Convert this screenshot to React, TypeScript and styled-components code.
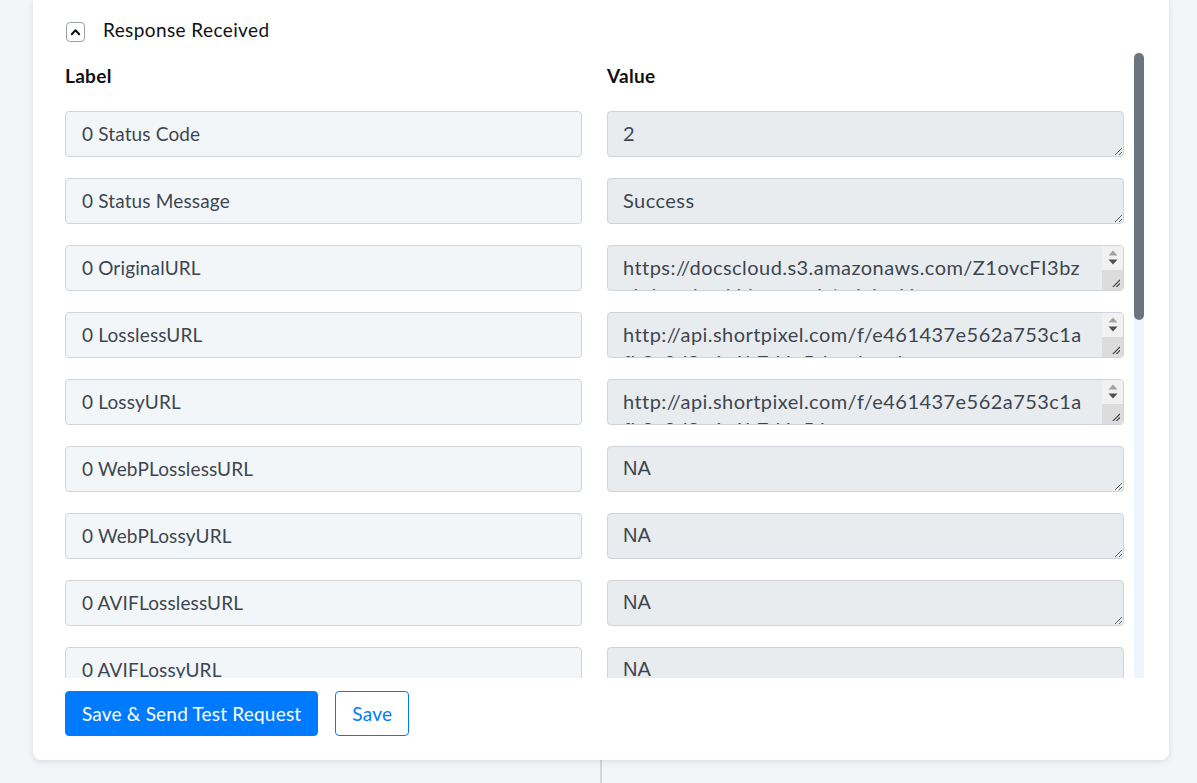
import React from "react";
import styled, { createGlobalStyle } from "styled-components";

const GlobalStyle = createGlobalStyle`
  html, body {
    margin: 0;
    padding: 0;
    background: #f3f6f9;
    overflow: hidden;
  }
  body {
    font-family: Lato, "Open Sans", sans-serif;
    color: #212529;
  }
  * { box-sizing: border-box; }
`;

const Page = styled.div`
  width: 1197px;
  height: 783px;
  padding: 0 28px 0 33px;
  display: flex;
  flex-direction: column;
`;

const Card = styled.section`
  background: #ffffff;
  border-radius: 0 0 8px 8px;
  box-shadow: 0 2px 6px rgba(30, 40, 60, 0.12);
  padding: 22px 25px 24px 32px;
  display: flex;
  flex-direction: column;
  position: relative;
  z-index: 1;
`;

const Connector = styled.div`
  width: 2px;
  flex: 1;
  margin: -8px auto 0;
  background: #d3d7dc;
`;

const Header = styled.div`
  display: flex;
  align-items: center;
  gap: 18px;
  height: 20px;
  margin-left: 1px;
`;

const Toggle = styled.button`
  width: 19px;
  height: 20px;
  padding: 0;
  border: 1px solid #9aa0a6;
  border-radius: 4px;
  background: #fff;
  display: flex;
  align-items: center;
  justify-content: center;
  cursor: pointer;
`;

const Title = styled.h3`
  margin: 0 0 4px;
  font-size: 19px;
  letter-spacing: 0.4px;
  font-weight: 400;
  color: #111;
  line-height: 20px;
`;

const ScrollArea = styled.div`
  margin-top: 11px;
  height: 625px;
  display: flex;
  gap: 10px;
`;

const Scroller = styled.div`
  flex: 1;
  overflow: hidden;
`;

const Track = styled.div`
  width: 10px;
  background: #edf4fd;
  display: flex;
  flex-direction: column;
`;

const Thumb = styled.div`
  height: 267px;
  border-radius: 5px;
  background: #6c757d;
`;

const Grid = styled.div`
  display: grid;
  grid-template-columns: 1fr 1fr;
  column-gap: 25px;
  row-gap: 21px;
`;

const ColumnHead = styled.div`
  font-size: 19px;
  letter-spacing: 0.3px;
  font-weight: 700;
  color: #111;
  line-height: 24px;
  padding-top: 11px;
  margin-bottom: 2px;
`;

const LabelField = styled.input`
  height: 46px;
  width: 100%;
  border: 1px solid #d0d5da;
  border-radius: 4px;
  background: #f3f6f9;
  padding: 0 16px 2px;
  font-family: Lato, "Open Sans", sans-serif;
  font-size: 19px;
  letter-spacing: 0.15px;
  color: #3d4650;
  outline: none;
`;

const ValueBox = styled.div`
  position: relative;
  height: 46px;
`;

const ValueField = styled.textarea<{ $plain?: boolean }>`
  height: 46px;
  width: 100%;
  border: 1px solid #ced4da;
  border-radius: 4px;
  background: #e9ecef;
  padding: 7px 15px;
  font-family: ${(p) =>
    p.$plain ? '"Liberation Sans", Arial, sans-serif' : 'Lato, "Open Sans", sans-serif'};
  font-size: 20px;
  letter-spacing: ${(p) => (p.$plain ? "0" : "0.45px")};
  line-height: 28px;
  color: #3d4650;
  outline: none;
  resize: vertical;
  display: block;
  overflow: hidden;
`;

/* native-looking vertical scrollbar drawn over an overflowing textarea */
const Gutter = styled.div`
  position: absolute;
  top: 1px;
  right: 1px;
  bottom: 1px;
  width: 21px;
  border-radius: 0 3px 3px 0;
  background: #f1f1f1;
  display: flex;
  flex-direction: column;
  align-items: center;
  overflow: hidden;
`;

const Arrows = styled.div`
  flex: 1;
  display: flex;
  flex-direction: column;
  align-items: center;
  justify-content: center;
  gap: 3px;
  padding-bottom: 2px;
`;

const Resizer = styled.div`
  height: 20px;
  width: 100%;
  background: #dcdcdc;
  display: flex;
  align-items: flex-end;
  justify-content: flex-end;
  padding: 0 3px 3px 0;
`;

const Actions = styled.div`
  display: flex;
  gap: 17px;
  margin-top: 13px;
`;

const Button = styled.button<{ $outline?: boolean }>`
  height: 45px;
  padding: 0 16px;
  border-radius: 4px;
  font-family: Lato, "Open Sans", sans-serif;
  font-size: 19px;
  letter-spacing: 0.2px;
  cursor: pointer;
  border: 1px solid #007bff;
  background: ${(p) => (p.$outline ? "#ffffff" : "#007bff")};
  color: ${(p) => (p.$outline ? "#007bff" : "#ffffff")};
`;

type Row = { label: string; value: string; plain?: boolean; overflow?: boolean };

const rows: Row[] = [
  { label: "0 Status Code", value: "2" },
  { label: "0 Status Message", value: "Success" },
  {
    label: "0 OriginalURL",
    value: "https://docscloud.s3.amazonaws.com/Z1ovcFI3bz\nxbdqrmlpwkhjcmvzmk/original.jpg",
    overflow: true,
  },
  {
    label: "0 LosslessURL",
    value: "http://api.shortpixel.com/f/e461437e562a753c1a\nfb2c9d8e4a1b7d6c5-lossless.jpg",
    overflow: true,
  },
  {
    label: "0 LossyURL",
    value: "http://api.shortpixel.com/f/e461437e562a753c1a\nfb2c9d8e4a1b7d6c5.jpg",
    overflow: true,
  },
  { label: "0 WebPLosslessURL", value: "NA", plain: true },
  { label: "0 WebPLossyURL", value: "NA", plain: true },
  { label: "0 AVIFLosslessURL", value: "NA", plain: true },
  { label: "0 AVIFLossyURL", value: "NA", plain: true },
  { label: "0 OriginalSize", value: "248913" },
  { label: "0 LosslessSize", value: "231047" },
  { label: "0 LoselessSize", value: "231047" },
  { label: "0 LossySize", value: "96422" },
  { label: "0 WebPLosslessSize", value: "NA", plain: true },
  { label: "0 WebPLoselessSize", value: "NA", plain: true },
  { label: "0 WebPLossySize", value: "NA", plain: true },
  { label: "0 AVIFLosslessSize", value: "NA", plain: true },
  { label: "0 AVIFLossySize", value: "NA", plain: true },
  { label: "0 TimeStamp", value: "2023-06-14 09:42:17" },
  { label: "0 PercentImprovement", value: "61.26" },
];

const ChevronUp = () => (
  <svg width="11" height="8" viewBox="0 0 11 8" aria-hidden="true">
    <path d="M1.8 6.2 L5.5 2.3 L9.2 6.2" fill="none" stroke="#111" strokeWidth="2" strokeLinecap="round" strokeLinejoin="round" />
  </svg>
);

const Triangle = ({ up, color }: { up?: boolean; color: string }) => (
  <svg width="10" height="6" viewBox="0 0 10 6" aria-hidden="true">
    <path d={up ? "M0.5 5.5 L5 0.5 L9.5 5.5 Z" : "M0.5 0.5 L9.5 0.5 L5 5.5 Z"} fill={color} />
  </svg>
);

const Grip = () => (
  <svg width="8" height="8" viewBox="0 0 8 8" aria-hidden="true">
    <path d="M1 8 L8 1 M4.5 8 L8 4.5" stroke="#444" strokeWidth="1.1" strokeLinecap="round" />
  </svg>
);

export default function App() {
  return (
    <>
      <GlobalStyle />
      <Page>
        <Card>
          <Header>
            <Toggle aria-label="Collapse">
              <ChevronUp />
            </Toggle>
            <Title>Response Received</Title>
          </Header>
          <ScrollArea>
            <Scroller>
              <Grid>
                <ColumnHead>Label</ColumnHead>
                <ColumnHead>Value</ColumnHead>
                {rows.map((r) => (
                  <React.Fragment key={r.label}>
                    <LabelField readOnly value={r.label} />
                    <ValueBox>
                      <ValueField readOnly $plain={r.plain} value={r.value} />
                      {r.overflow && (
                        <Gutter>
                          <Arrows>
                            <Triangle up color="#a3a3a3" />
                            <Triangle color="#505050" />
                          </Arrows>
                          <Resizer>
                            <Grip />
                          </Resizer>
                        </Gutter>
                      )}
                    </ValueBox>
                  </React.Fragment>
                ))}
              </Grid>
            </Scroller>
            <Track>
              <Thumb />
            </Track>
          </ScrollArea>
          <Actions>
            <Button>Save &amp; Send Test Request</Button>
            <Button $outline>Save</Button>
          </Actions>
        </Card>
        <Connector />
      </Page>
    </>
  );
}
